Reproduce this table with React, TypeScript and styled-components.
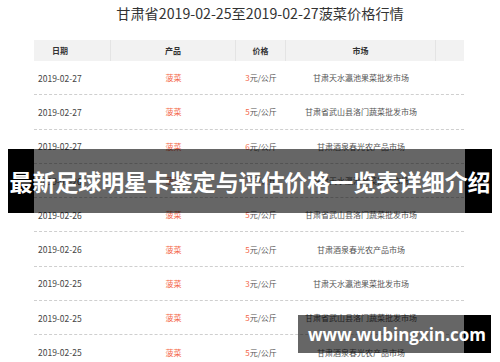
import React from "react";
import styled, { createGlobalStyle } from "styled-components";

const Global = createGlobalStyle`
  html, body { margin: 0; padding: 0; background: #fff; }
  body { font-family: "Noto Sans CJK SC", "Noto Sans", sans-serif; }
`;

const Page = styled.div`
  position: relative;
  width: 500px;
  height: 362px;
  overflow: hidden;
  padding: 0 8px;
  box-sizing: border-box;
`;

const Title = styled.h1`
  margin: 0;
  padding: 4px 0 0 20px;
  height: 40px;
  box-sizing: border-box;
  font-size: 14.2px;
  line-height: 18px;
  font-weight: 400;
  color: #333;
  text-align: center;
`;

const Table = styled.div`
  width: 430px;
  margin: 0 auto 0 26px;
`;

const cols = "77px 125px 50px 150px 28px";

const HeadRow = styled.div`
  display: grid;
  grid-template-columns: ${cols};
  height: 21px;
  background: #f2f2f2;
`;

const HeadCell = styled.div<{ $align?: string; $pad?: number; $last?: boolean }>`
  display: flex;
  align-items: center;
  justify-content: ${(p) => p.$align || "center"};
  padding-left: ${(p) => p.$pad || 0}px;
  border-right: ${(p) => (p.$last ? "none" : "1px solid #e4e4e4")};
  font-size: 8px;
  font-weight: 700;
  color: #333;
`;

const Row = styled.div`
  display: grid;
  grid-template-columns: ${cols};
  height: 34.3px;
  box-sizing: border-box;
  border-bottom: 1px dashed #cfcfcf;
`;

const Cell = styled.div<{ $align?: string; $pad?: number }>`
  display: flex;
  align-items: center;
  justify-content: ${(p) => p.$align || "center"};
  padding-left: ${(p) => p.$pad || 0}px;
  font-size: 8px;
  color: #555;
  white-space: nowrap;
`;

const DateText = styled.span`
  font-size: 8.5px;
  color: #444;
`;

const Red = styled.span`
  color: #f4694a;
`;

const Banner = styled.div`
  position: absolute;
  left: 8px;
  right: 8px;
  top: 149px;
  height: 64px;
  display: flex;
  align-items: center;
  justify-content: center;
  background: linear-gradient(
    to right,
    #000 26px,
    rgba(0, 0, 0, 0.6) 26px,
    rgba(0, 0, 0, 0.6) calc(100% - 27px),
    #000 calc(100% - 27px)
  );
  color: #fff;
  font-size: 23px;
  font-weight: 700;
  white-space: nowrap;
  letter-spacing: -0.1px;
`;

const Watermark = styled.div`
  position: absolute;
  left: 298px;
  top: 315px;
  width: 193px;
  height: 38px;
  box-sizing: border-box;
  padding-left: 10px;
  display: flex;
  align-items: center;
  background: linear-gradient(
    to right,
    rgba(0, 0, 0, 0.6) 166px,
    #000 166px
  );
  color: #fff;
  font-family: "Open Sans", "Liberation Sans", sans-serif;
  font-size: 17px;
  font-weight: 700;
  white-space: nowrap;
`;

const rows = [
  ["2019-02-27", "3", "甘肃天水瀛池果菜批发市场"],
  ["2019-02-27", "5", "甘肃省武山县洛门蔬菜批发市场"],
  ["2019-02-27", "6", "甘肃酒泉春光农产品市场"],
  ["2019-02-26", "3", "甘肃天水瀛池果菜批发市场"],
  ["2019-02-26", "5", "甘肃省武山县洛门蔬菜批发市场"],
  ["2019-02-26", "5", "甘肃酒泉春光农产品市场"],
  ["2019-02-25", "3", "甘肃天水瀛池果菜批发市场"],
  ["2019-02-25", "5", "甘肃省武山县洛门蔬菜批发市场"],
  ["2019-02-25", "5", "甘肃酒泉春光农产品市场"],
];

export default function App() {
  return (
    <Page>
      <Global />
      <Title>甘肃省2019-02-25至2019-02-27菠菜价格行情</Title>
      <Table>
        <HeadRow>
          <HeadCell $align="flex-start" $pad={18}>日期</HeadCell>
          <HeadCell>产品</HeadCell>
          <HeadCell>价格</HeadCell>
          <HeadCell>市场</HeadCell>
          <HeadCell $last />
        </HeadRow>
        {rows.map(([d, p, m], i) => (
          <Row key={i}>
            <Cell $align="flex-start" $pad={4}>
              <DateText>{d}</DateText>
            </Cell>
            <Cell>
              <Red>菠菜</Red>
            </Cell>
            <Cell>
              <Red>{p}</Red>元/公斤
            </Cell>
            <Cell>{m}</Cell>
            <Cell />
          </Row>
        ))}
      </Table>
      <Banner>最新足球明星卡鉴定与评估价格一览表详细介绍</Banner>
      <Watermark>www.wubingxin.com</Watermark>
    </Page>
  );
}
